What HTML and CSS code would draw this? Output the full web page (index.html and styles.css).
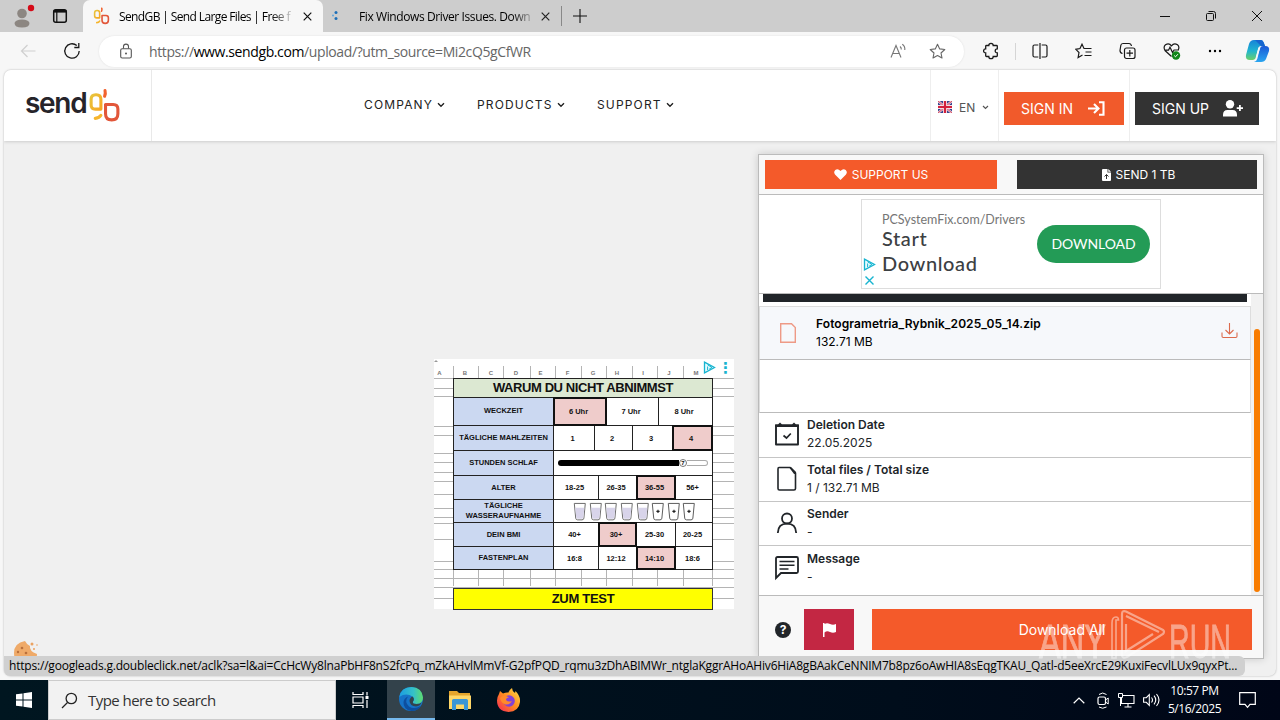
FILE: index.html
```html
<!DOCTYPE html>
<html lang="en">
<head>
    <meta charset="UTF-8">
    <meta name="viewport" content="width=device-width, initial-scale=1.0">
    <title>SendGB | Send Large Files</title>
    <link rel="stylesheet" href="styles.css">
</head>
<body>
    <svg width="0" height="0" class="defs" aria-hidden="true">
        <defs>
            <linearGradient id="yellow" x1="0" y1="0" x2="1" y2="1"><stop offset="0" stop-color="#e8c53c"/><stop offset="1" stop-color="#f6a623"/></linearGradient>
            <linearGradient id="edgeA" x1="0" y1="0" x2="1" y2="0"><stop offset="0" stop-color="#1b9de2"/><stop offset=".6" stop-color="#35c1c8"/><stop offset="1" stop-color="#5fdc6c"/></linearGradient>
            <linearGradient id="copA" x1="0" y1="0" x2="0" y2="1"><stop offset="0" stop-color="#1683d8"/><stop offset=".55" stop-color="#20b5d0"/><stop offset="1" stop-color="#6bd06a"/></linearGradient>
            <linearGradient id="copB" x1="0" y1="0" x2="0" y2="1"><stop offset="0" stop-color="#1a59d6"/><stop offset="1" stop-color="#2aa6f0"/></linearGradient>
            <linearGradient id="fox" x1="1" y1="0" x2="0" y2="1"><stop offset="0" stop-color="#ffe24a"/><stop offset=".5" stop-color="#ff8a1f"/><stop offset="1" stop-color="#f5205c"/></linearGradient>
            <symbol id="gb" viewBox="0 0 32 34">
                <g fill="none" stroke-width="3" stroke-linecap="round" stroke-linejoin="round">
                    <path d="M12.500 20.500H7q-4 0-4-4V11q0-4.500 4.500-4.500H8q4.500 0 4.500 4.500v9.500" stroke="url(#yellow)"/>
                    <path d="M7 29.500q4-.3 5.500-3" stroke="#f6b52c"/>
                    <path d="M16.500 2.500q.8 3-.4 5.500" stroke="#f2622f"/>
                    <path d="M17 16h7.500q4.500 0 4.500 4.500V25q0 6-6 6t-6-6z" stroke="#e2573a"/>
                </g>
            </symbol>
            <symbol id="caret" viewBox="0 0 8 6"><path d="M1 1.200l3 3 3-3" fill="none" stroke="currentColor" stroke-width="1.400"/></symbol>
            <symbol id="adplay" viewBox="0 0 13 13"><path d="M1.500 1.200v10.600l10-5.300z" fill="#e4fbff" stroke="#17b4d0" stroke-width="1.300"/><path d="M4.600 5.500v3.500M4.600 3.800l4.400 2.700-2.800 1.600" fill="none" stroke="#17b4d0"/></symbol>
            <symbol id="glass" viewBox="0 0 14 20"><path d="M1.200 1.500h11.600L11.300 17q-.2 1.800-2 1.800H4.700q-1.800 0-2-1.800z" fill="#fff" stroke="#666"/><path d="M2.200 6h9.600l-1.100 10.500q-.2 1.200-1.500 1.200H4.800q-1.300 0-1.500-1.200z" fill="#d8d4ea"/></symbol>
            <symbol id="glass-empty" viewBox="0 0 14 20"><path d="M1.200 1.500h11.600L11.300 17q-.2 1.800-2 1.800H4.700q-1.800 0-2-1.800z" fill="#fff" stroke="#555"/><path d="M5.500 9.800h3.400M7.200 8.100v3.400" stroke="#222" stroke-width="1.200"/></symbol>
        </defs>
    </svg>

    <!-- browser tabs -->
    <div class="tabstrip">
        <svg class="profile" width="22" height="24" viewBox="0 0 22 24"><circle cx="8" cy="9.500" r="4.800" fill="#8c8681"/><path d="M.5 19q1-3.600 7.500-3.600t7.500 3.600q0 4.500-7.500 4.500T.5 19z" fill="#8c8681"/><circle cx="17" cy="4" r="3.200" fill="#d50b18"/></svg>
        <svg class="workspaces" width="16" height="16" viewBox="0 0 16 16"><rect x="1.700" y="1.700" width="12.600" height="12.600" rx="2" fill="none" stroke="#111" stroke-width="1.500"/><path d="M1.700 3.300h12.600" stroke="#111" stroke-width="2.600"/><path d="M4.800 4v10" stroke="#111" stroke-width="1.200"/></svg>
        <div class="tab active">
            <svg width="17" height="18"><use href="#gb"/></svg>
            <span class="tab-title t1">SendGB | Send Large Files | Free f</span>
            <svg class="tab-x" width="9" height="9" viewBox="0 0 9 9"><path d="M.7.7l7.600 7.600M8.300.7L.7 8.300" stroke="#111" stroke-width="1.200"/></svg>
        </div>
        <div class="tab second">
            <svg width="8" height="12" viewBox="0 0 8 12"><circle cx="5" cy="2.500" r="1.500" fill="#1d6fb8"/><circle cx="5" cy="8.500" r="1.500" fill="#1d6fb8"/><circle cx="2" cy="5.500" r="1" fill="#5fa4db"/></svg>
            <span class="tab-title t2">Fix Windows Driver Issues. Down</span>
            <svg class="tab-x" width="9" height="9" viewBox="0 0 9 9"><path d="M.7.7l7.600 7.600M8.300.7L.7 8.300" stroke="#222" stroke-width="1.200"/></svg>
        </div>
        <span class="tab-sep"></span>
        <svg class="newtab" width="14" height="14" viewBox="0 0 14 14"><path d="M7 0v14M0 7h14" stroke="#111" stroke-width="1.100"/></svg>
        <div class="winbtns">
            <svg width="10" height="10" viewBox="0 0 10 10"><path d="M0 5.500h10" stroke="#111"/></svg>
            <svg width="10" height="10" viewBox="0 0 10 10"><rect x=".5" y="2.500" width="7" height="7" rx="1" fill="none" stroke="#111"/><path d="M2.500.5h5q2 0 2 2v5" fill="none" stroke="#111"/></svg>
            <svg width="10" height="10" viewBox="0 0 10 10"><path d="M0 0l10 10M10 0L0 10" stroke="#111"/></svg>
        </div>
    </div>

    <!-- address bar -->
    <div class="toolbar">
        <svg class="back" width="16" height="14" viewBox="0 0 16 14"><path d="M15.500 7H1.500M7.500 1l-6 6 6 6" fill="none" stroke="#cfcfcf" stroke-width="1.200"/></svg>
        <svg class="reload" width="18" height="18" viewBox="0 0 18 18"><path d="M16.200 9a7.200 7.200 0 1 1-2.400-5.400" fill="none" stroke="#1a1a1a" stroke-width="1.300"/><path d="M15.800 1v4.500h-4.500" fill="none" stroke="#1a1a1a" stroke-width="1.300"/></svg>
        <div class="address">
            <svg width="12" height="16" viewBox="0 0 12 16"><rect x=".7" y="5.700" width="10.600" height="9.300" rx="1.500" fill="none" stroke="#555" stroke-width="1.100"/><path d="M3.500 5.500V3.600a2.500 2.500 0 0 1 5 0v1.900" fill="none" stroke="#555" stroke-width="1.100"/><circle cx="6" cy="10.400" r="1" fill="#555"/></svg>
            <span class="url">https://<b>www.sendgb.com</b>/upload/?utm_source=Mi2cQ5gCfWR</span>
            <svg class="aloud" width="17" height="16" viewBox="0 0 17 16"><path d="M1 14.500L6 2.500l5 12M2.800 10.500h6.500M10 3.500q1.500 1.200 1.300 3M12.300 1.300q3 2.200 2.500 5.700" fill="none" stroke="#777" stroke-width="1.100"/></svg>
            <svg width="17" height="16" viewBox="0 0 17 16"><path d="M8.500 1.200l2.200 4.700 5.100.6-3.800 3.500 1 5-4.500-2.500L4 15l1-5-3.800-3.500 5.100-.6z" fill="none" stroke="#666" stroke-width="1.100" stroke-linejoin="round"/></svg>
        </div>
        <div class="tools">
            <svg width="16" height="18" viewBox="0 0 16 18"><path d="M3.500 3.500h2.300a2.200 2.200 0 0 1 4.400 0h3.300q.8 0 .8.800v2.500a2.100 2.100 0 0 0 0 4.200v2.700q0 .8-.8.800h-3.300a2.200 2.200 0 0 1-4.400 0H3.500q-.8 0-.8-.8V11a2 2 0 0 1 0-4.200V4.300q0-.8.8-.8z" fill="none" stroke="#1a1a1a" stroke-width="1.300"/></svg>
            <i class="tool-sep"></i>
            <svg width="16" height="16" viewBox="0 0 16 16"><path d="M6.300 2H2.500Q1 2 1 3.500v9Q1 14 2.500 14h3.800M9.700 2h3.800Q15 2 15 3.500v9q0 1.500-1.500 1.500H9.700M8 0v16" fill="none" stroke="#1a1a1a" stroke-width="1.200"/></svg>
            <svg width="17" height="16" viewBox="0 0 17 16"><path d="M9.500 5.500H9L7 1.200 5 5.500.8 6.300 4 9.500l-.9 5L7.500 12M9.500 5.500h7M10.500 9h6M9.500 12.500h7" fill="none" stroke="#1a1a1a" stroke-width="1.200"/></svg>
            <svg width="17" height="18" viewBox="0 0 17 18"><rect x="5.500" y="6" width="10.500" height="10.500" rx="2" fill="none" stroke="#1a1a1a" stroke-width="1.200"/><path d="M10.800 8v6.500M7.500 11.200H14M3.500 11.500Q1 11 1 8.500L1.800 3.500Q2 1.500 4 1.500h6q2 0 2.500 2.500" fill="none" stroke="#1a1a1a" stroke-width="1.200"/></svg>
            <svg width="18" height="18" viewBox="0 0 18 18"><path d="M8.500 14.500L2 8.500Q0 5 2.500 2.800 6 .5 8.500 3.800 11 .5 14.500 2.800 17 5 15 8.300M1.500 8.200h4l1.500-3 2.500 5.300 1.500-2.500h5" fill="none" stroke="#1a1a1a" stroke-width="1.200"/><circle cx="13" cy="13.500" r="4.200" fill="#11861a"/><path d="M11.200 13.500l1.300 1.300 2.400-2.600" fill="none" stroke="#fff"/></svg>
            <svg width="14" height="4" viewBox="0 0 14 4"><circle cx="2" cy="2" r="1.200"/><circle cx="7" cy="2" r="1.200"/><circle cx="12" cy="2" r="1.200"/></svg>
            <svg class="copilot" width="25" height="24" viewBox="0 0 25 24"><path d="M9 1h7q2 0 2.700 2.500L20 7h-4q-2 0-2.600 2L11 18q-.8 3-3.500 3H5q-5 0-4-5L4 5q1.300-4 5-4z" fill="url(#copA)"/><path d="M16 23H9q2.500-.3 3.400-3.500L15 9q.6-2 3-2h2q5 0 4 5l-3 8q-1.300 3-5 3z" fill="url(#copB)"/><path d="M10 1h6q2 0 2.700 2.500L20 7h-4l-2-2z" fill="#1665cf"/><path d="M13.400 8.500h2L12 18l-1.300.5z" fill="#f4f8fb"/></svg>
        </div>
    </div>

    <div class="viewport">
        <header class="site-header">
            <a class="logo"><span>send</span><svg width="33" height="35"><use href="#gb"/></svg></a>
            <nav class="menu">
                <a class="m1">COMPANY <svg width="8" height="6"><use href="#caret"/></svg></a>
                <a class="m2">PRODUCTS <svg width="8" height="6"><use href="#caret"/></svg></a>
                <a class="m3">SUPPORT <svg width="8" height="6"><use href="#caret"/></svg></a>
            </nav>
            <div class="lang">
                <svg width="14" height="12" viewBox="0 0 14 12"><path d="M0 0h14v12H0z" fill="#34458f"/><path d="M0 0l14 12M14 0L0 12" stroke="#e9c9d6" stroke-width="2.400"/><path d="M0 0l14 12M14 0L0 12" stroke="#d32f45" stroke-width=".8"/><path d="M7 0v12M0 6h14" stroke="#f6dfe5" stroke-width="4"/><path d="M7 0v12M0 6h14" stroke="#d3203c" stroke-width="2.200"/></svg>
                <span>EN</span>
                <svg width="7" height="5"><use href="#caret"/></svg>
            </div>
            <div class="signin-wrap"><a class="btn signin"><span>SIGN IN</span><svg width="17" height="15" viewBox="0 0 17 15"><path d="M0 7.500h9.500M6 3l4.500 4.500L6 12M11 1.200h4.500v12.600H11" fill="none" stroke="#fff" stroke-width="2.100"/></svg></a></div>
            <div class="signup-wrap"><a class="btn signup"><span>SIGN UP</span><svg width="20" height="17" viewBox="0 0 20 17"><circle cx="7" cy="4.300" r="4.200" fill="#fff"/><path d="M0 16.500v-1.800Q0 10 4.500 10h5q4.500 0 4.500 4.700v1.800zM16 5v6h1.800V5zM13.700 7.200v1.700H20V7.200z" fill="#fff"/></svg></a></div>
        </header>

        <main class="stage">
            <!-- left banner -->
            <div class="banner">
                <svg class="sheet" width="300" height="250" viewBox="0 0 300 250">
                    <path transform="translate(0 .5)" d="M0 19h300M0 29h300M0 37h300M0 67h300M0 76h300M0 94h300M0 103h300M0 113h300M0 122h300M0 135h300M0 149h300M0 158h300M0 164h300M0 180h300M0 202h300M0 210h300M0 219h300M0 228h300M0 239h300" stroke="#b4b4b4"/>
                    <path d="M19.500 7v220M44.500 7v220M69.500 7v220M96.500 7v220M121.500 7v220M147.500 7v220M172.500 7v220M198.500 7v220M223.500 7v220M249.500 7v220M278.500 19v208" stroke="#b4b4b4"/>
                    <path d="M0 0h300v7H0z" fill="#fff"/>
                    <path d="M0 3l2-2 2 2z" fill="#999"/>
                    <g class="cols"><text x="5.500" y="16">A</text><text x="31" y="16">B</text><text x="57" y="16">C</text><text x="82" y="16">D</text><text x="106.500" y="16">E</text><text x="133.500" y="16">F</text><text x="159" y="16">G</text><text x="183" y="16">H</text><text x="209" y="16">I</text><text x="235" y="16">J</text><text x="262" y="16">M</text></g>
                </svg>
                <div class="adchoices"><svg width="13" height="13"><use href="#adplay"/></svg><i>⋮</i></div>
                <div class="quiz">
                    <div class="q-title">WARUM DU NICHT ABNIMMST</div>
                    <div class="q-row r1"><b>WECKZEIT</b><span class="on">6 Uhr</span><span>7 Uhr</span><span>8 Uhr</span></div>
                    <div class="q-row r2"><b>TÄGLICHE MAHLZEITEN</b><span>1</span><span>2</span><span>3</span><span class="on">4</span></div>
                    <div class="q-row r3"><b>STUNDEN SCHLAF</b><div class="slider"><div class="slider-fill"></div><em>7</em><div class="slider-rest"></div></div></div>
                    <div class="q-row r4"><b>ALTER</b><span>18-25</span><span>26-35</span><span class="on">36-55</span><span>56+</span></div>
                    <div class="q-row r5"><b>TÄGLICHE<br>WASSERAUFNAHME</b>
                        <div class="glasses">
                            <svg><use href="#glass"/></svg><svg><use href="#glass"/></svg><svg><use href="#glass"/></svg><svg><use href="#glass"/></svg><svg><use href="#glass"/></svg><svg><use href="#glass-empty"/></svg><svg><use href="#glass-empty"/></svg><svg><use href="#glass-empty"/></svg>
                        </div>
                    </div>
                    <div class="q-row r6"><b>DEIN BMI</b><span>40+</span><span class="on">30+</span><span>25-30</span><span>20-25</span></div>
                    <div class="q-row r7"><b>FASTENPLAN</b><span>16:8</span><span>12:12</span><span class="on">14:10</span><span>18:6</span></div>
                </div>
                <div class="q-cta">ZUM TEST</div>
            </div>

            <!-- transfer card -->
            <section class="card">
                <div class="card-top">
                    <a class="support"><svg width="13" height="11" viewBox="0 0 13 11"><path d="M6.500 11L1 5.600Q-.8 3 1.300.9 4-.9 6.500 2 9-.9 11.700.9 13.800 3 12 5.600z" fill="#fff"/></svg><span>SUPPORT US</span></a>
                    <a class="send"><svg width="9" height="12" viewBox="0 0 9 12"><path d="M0 1q0-1 1-1h4.500v3.500H9V11q0 1-1 1H1q-1 0-1-1zM6.300 0L9 2.700H6.300z" fill="#fff"/><path d="M4.500 10V5.500M2.500 7.500l2-2 2 2" fill="none" stroke="#333"/></svg><span>SEND 1 TB</span></a>
                </div>
                <div class="card-ad">
                    <div class="ad-box">
                        <div class="ad-side"><svg width="13" height="13"><use href="#adplay"/></svg><svg width="11" height="11" viewBox="0 0 11 11"><path d="M1.500 1.500l8 8M9.500 1.500l-8 8" stroke="#17b4d0" stroke-width="1.400"/></svg></div>
                        <div class="ad-copy"><small>PCSystemFix.com/Drivers</small><strong class="s1">Start</strong><strong class="s2">Download</strong></div>
                        <a class="ad-btn">DOWNLOAD</a>
                    </div>
                </div>
                <div class="card-body">
                    <div class="scroll">
                        <div class="bar"></div>
                        <div class="file">
                            <svg width="16" height="20" viewBox="0 0 16 20"><path d="M.7.7h10.800l3.800 3.800v14.800H.7z" fill="none" stroke="#ee9a86" stroke-width="1.400"/></svg>
                            <div class="pair"><b class="fname">Fotogrametria_Rybnik_2025_05_14.zip</b><span class="s-size">132.71 MB</span></div>
                            <svg class="dl-icon" width="17" height="16" viewBox="0 0 17 16"><path d="M8.500 0v11M4.500 7l4 4 4-4M1 9.500v3.800q0 1.200 1.200 1.200h12.600q1.200 0 1.200-1.200V9.500" fill="none" stroke="#dc6b4d" stroke-width="1.100"/></svg>
                        </div>
                        <div class="blank"></div>
                        <div class="info i1"><svg width="26" height="26" viewBox="0 0 26 26"><path d="M2 4.500h22v19H2z" fill="none" stroke="#212529" stroke-width="1.900" stroke-linejoin="round"/><path d="M1 3.500h3l2-2 2 2h10l2-2 2 2h3V6H1z" fill="#212529"/><path d="M9.500 14.500l3 2.500 4.300-4.500" fill="none" stroke="#212529" stroke-width="1.700"/></svg><div class="pair"><b>Deletion Date</b><span>22.05.2025</span></div></div>
                        <div class="info i2"><svg width="26" height="26" viewBox="0 0 26 26"><path d="M5 1.500h11l5.500 5.500v15.500q0 1.500-1.500 1.500H5.500Q4 24 4 22.500V3q0-1.500 1-1.500z" fill="none" stroke="#212529" stroke-width="1.600"/><path d="M15 1h2l5 5v2h-2z" fill="#212529"/></svg><div class="pair"><b>Total files / Total size</b><span>1 / 132.71 MB</span></div></div>
                        <div class="info i3"><svg width="26" height="26" viewBox="0 0 26 26"><circle cx="13" cy="8.500" r="5" fill="none" stroke="#212529" stroke-width="1.800"/><path d="M3.800 23q.3-9.300 9.200-9.300t9.200 9.300" fill="none" stroke="#212529" stroke-width="1.800"/></svg><div class="pair"><b>Sender</b><span>-</span></div></div>
                        <div class="info i4"><svg width="26" height="26" viewBox="0 0 26 26"><path d="M2 23V3.500Q2 2 3.500 2h19Q24 2 24 3.500v13q0 1.500-1.500 1.500H7z" fill="none" stroke="#212529" stroke-width="1.800"/><path d="M5.500 6.500h15M5.500 10.300h15M5.500 14h9" stroke="#212529" stroke-width="1.600"/></svg><div class="pair"><b>Message</b><span>-</span></div></div>
                    </div>
                    <div class="track"><div class="thumb"></div></div>
                </div>
                <div class="card-foot">
                    <span class="help">?</span>
                    <a class="flag"><svg width="13" height="14" viewBox="0 0 13 14"><path d="M0 0h1.500v1Q4-.5 7 1t6 0v8q-3 1.500-6 0t-5.500.5V14H0z" fill="#fff"/></svg></a>
                    <a class="dl-all">Download All</a>
                </div>
            </section>
        </main>
        <svg class="cookie" width="26" height="26" viewBox="0 0 26 26"><path d="M12 1Q14 5 17 6q-1 5 7 8 0 11-11 11.500Q1 25 1 13 1 3 12 1z" fill="#efaa69"/><g fill="#b9703c"><circle cx="9" cy="8" r="1.300"/><circle cx="5" cy="12" r="1.200"/><circle cx="13" cy="13" r="1.300"/></g><g fill="#eba261"><circle cx="19" cy="4" r="1.500"/><circle cx="24" cy="5" r=".8"/><circle cx="21" cy="9" r="1"/></g></svg>
    </div>

    <div class="status"><span>https://googleads.g.doubleclick.net/aclk?sa=l&amp;ai=CcHcWy8lnaPbHF8nS2fcPq_mZkAHvlMmVf-G2pfPQD_rqmu3zDhABIMWr_ntglaKggrAHoAHiv6HiA8gBAakCeNNIM7b8pz6oAwHIA8sEqgTKAU_Qatl-d5eeXrcE29KuxiFecvlLUx9qyxPt...</span></div>

    <svg class="watermark" width="206" height="64" viewBox="0 0 206 64">
        <g class="wm-text"><text x="3" y="50" textLength="67" lengthAdjust="spacingAndGlyphs">ANY</text><text x="133" y="50" textLength="62" lengthAdjust="spacingAndGlyphs">RUN</text></g>
        <path d="M76 50V15q0-6 4-6 2.500 0 2.500 3h-2.500v38z" fill="none" stroke="#fff" stroke-width="1.600"/>
        <path d="M86 48V6q0-4 4-2.500L127 22q2 1.500 0 4L91 49q-5 2-5-2M90 8l33 16M90 16v27l27-17" fill="none" stroke="#fff" stroke-width="2.200"/>
    </svg>

    <!-- windows taskbar -->
    <footer class="taskbar">
        <div class="start"><svg width="16" height="16" viewBox="0 0 16 16"><path d="M0 2.300L6.500 1.400v6.100H0zM7.500 1.200L16 0v7.500H7.500zM0 8.500h6.500v6.100L0 13.700zM7.500 8.500H16V16l-8.500-1.200z" fill="#fff"/></svg></div>
        <div class="search"><svg width="17" height="17" viewBox="0 0 17 17"><circle cx="10.300" cy="6.500" r="5.200" fill="none" stroke="#222" stroke-width="1.300"/><path d="M6.500 10.500L1 16" stroke="#222" stroke-width="1.300"/></svg><span>Type here to search</span></div>
        <div class="apps">
            <div><svg width="17" height="16" viewBox="0 0 17 16"><path d="M1 0v2.500h10V0M1 5h10v6H1zM1 16v-2.500h10V16M15 0v3.500M15 8v8" fill="none" stroke="#fff" stroke-width="1.200"/><path d="M13.500 4h3v3h-3z" fill="#fff"/></svg></div>
            <div class="running"><svg width="24" height="24" viewBox="0 0 24 24"><circle cx="12" cy="12" r="12" fill="#1673c8"/><path d="M.3 10Q2 0 12.500 0 23 .5 24 10.500q0 6-6.500 6.500-4.500 0-3.500-2.500 2-2.500-.5-5Q7 5.500.3 10z" fill="url(#edgeA)"/><path d="M9 9.500q-4 5 1 10 5 3.500 12-.8-3 5.300-9.500 5.300Q4 22.500 4.500 15 5 11 9 9.500z" fill="#0d4f9f"/><path d="M13.500 9.500q2.500 2.500.5 5-1 2.500 3.500 2.500 3.500 0 5-1.500-1 3.500-5.500 4-6-.5-6.500-5.500 0-3 3-4.500z" fill="#33434c"/></svg></div>
            <div><svg width="22" height="19" viewBox="0 0 22 19"><path d="M0 0h8l2 2h11v4H0z" fill="#e5a52c"/><path d="M0 4.500h22V18H0z" fill="#ffd768"/><path d="M3 9.500q0-1.500 1.500-1.500h13Q19 8 19 9.500V19h-4v-5.500H7V19H3z" fill="#3b96d6"/></svg></div>
            <div><svg width="23" height="24" viewBox="0 0 23 24"><path d="M2 6l1-3 3 2.500Q9 4 11.500 4.500 12 2 15 0q0 3 3 5l.5-2q5 5 4.500 11-1 9.500-11.500 10Q0 23 0 12.500 0 9 2 6z" fill="url(#fox)"/><circle cx="12" cy="13" r="5.800" fill="#8342d6"/><path d="M3 10q4-4 9-.5-3 0-3 2.500 2 2.500 6 1-2 4-6.500 3.500Q4 15 3 10z" fill="#ff8a2a"/></svg></div>
        </div>
        <div class="tray">
            <svg width="12" height="7" viewBox="0 0 12 7"><path d="M.7 6.200L6 1l5.300 5.200" fill="none" stroke="#fff" stroke-width="1.200"/></svg>
            <svg width="13" height="17" viewBox="0 0 13 17"><rect x="1" y="5" width="7.500" height="7.500" rx="1.500" fill="none" stroke="#fff" stroke-width="1.200"/><path d="M8.500 8l2.700-2v6l-2.700-2M2 2.500Q5.500-.5 9.500 2.500M2 15q3.500 2.500 7.500 0" fill="none" stroke="#fff"/></svg>
            <svg width="17" height="15" viewBox="0 0 17 15"><path d="M5 2.500h11v8H3.500V5M10 10.500V14M6.500 14h7" fill="none" stroke="#fff" stroke-width="1.100"/><path d="M.5.500h4v4h-4zM2.500 4.500V13" fill="none" stroke="#fff"/></svg>
            <svg width="17" height="14" viewBox="0 0 17 14"><path d="M.6 4.700h2.700l3-3v10.600l-3-3H.6zM8.500 4.500q2 2.500 0 5M11 2.700q3.500 4.300 0 8.600M13.500 1q5 6 0 12" fill="none" stroke="#fff" stroke-width="1.100"/></svg>
            <div class="clock"><span class="c1">10:57 PM</span><span class="c2">5/16/2025</span></div>
            <svg width="17" height="17" viewBox="0 0 17 17"><path d="M.7.700h15.600v11.600H11l-2.500 3-2.500-3H.7z" fill="none" stroke="#fff" stroke-width="1.200"/></svg>
        </div>
    </footer>
</body>
</html>
```
FILE: styles.css
```css
* {
    box-sizing: border-box;
}

body {
    margin: 0;
    width: 1280px;
    height: 720px;
    overflow: hidden;
    position: relative;
    display: flex;
    flex-direction: column;
    background: #f7f7f7;
    font-family: "Inter", "Liberation Sans", sans-serif;
    color: #212529;
}

svg {
    display: block;
    flex: none;
}

span, b, strong, small, a {
    white-space: nowrap;
}

.defs {
    position: absolute;
}

/* browser chrome */
.tabstrip {
    height: 32px;
    flex: none;
    display: flex;
    align-items: center;
    background: #cdcdcd;
    font-family: "Open Sans", "Noto Sans", sans-serif;
}

.profile {
    margin: 0 0 0 14px;
}

.workspaces {
    margin: 0 15px 0 16px;
}

.tab {
    height: 32px;
    width: 240px;
    display: flex;
    align-items: center;
    padding: 0 11px 0 10px;
    color: #111;
}

.tab.active {
    background: #f7f7f7;
    border-radius: 7px 7px 0 0;
}

.tab.second {
    padding: 0 13px 0 8px;
}

.tab-title {
    flex: 1;
    overflow: hidden;
    font-size: 12px;
    color: #000;
    -webkit-mask-image: linear-gradient(to right, #000 88%, rgba(0, 0, 0, 0.15) 100%);
    mask-image: linear-gradient(to right, #000 88%, rgba(0, 0, 0, 0.15) 100%);
}

.t1 {
    margin: 0 11px 0 9px;
    letter-spacing: -0.62px;
}

.t2 {
    margin: 0 8px 0 20px;
    letter-spacing: -0.4px;
}

.tab-sep {
    width: 1px;
    height: 20px;
    margin-left: -2px;
    background: #888;
}

.newtab {
    margin-left: 11px;
}

.winbtns {
    display: flex;
    gap: 36px;
    margin-left: auto;
    padding-right: 18px;
}

.toolbar {
    height: 38px;
    flex: none;
    display: flex;
    align-items: center;
    background: #f7f7f7;
}

.back {
    margin-left: 20px;
}

.reload {
    margin: 0 18px 0 27px;
}

.address {
    width: 865px;
    height: 31px;
    display: flex;
    align-items: center;
    padding: 0 18px 0 21px;
    background: #fff;
    border-radius: 16px;
    box-shadow: 0 0 2px #ddd;
}

.url {
    flex: 1;
    margin-left: 17px;
    font: 14px "Open Sans", "Noto Sans", sans-serif;
    letter-spacing: -0.39px;
    color: #666;
}

.url b {
    font-weight: 400;
    color: #000;
}

.aloud {
    margin-right: 22px;
}

.tools {
    flex: 1;
    display: flex;
    align-items: center;
    gap: 27px;
    padding-left: 19px;
}

.tool-sep {
    width: 1px;
    height: 17px;
    margin: 0 -11px;
    background: #d5d5d5;
}

.copilot {
    margin-left: -4px;
}

.viewport {
    position: relative;
    height: 606px;
    flex: none;
    margin: 0 4px;
    overflow: hidden;
    border-radius: 7px;
    background: #f0f0f0;
    box-shadow: 0 0 2px #aaa;
}

/* site header */
.site-header {
    height: 71px;
    display: flex;
    background: #fff;
    box-shadow: 0 1px 3px #ccc;
}

.logo {
    width: 148px;
    display: flex;
    padding: 18px 0 0 21px;
    border-right: 1px solid #e9e9e9;
}

.logo span {
    width: 63px;
    font: 600 28px/30px "Inter", sans-serif;
    letter-spacing: -1.3px;
    color: #26242a;
}

.menu {
    flex: 1;
    display: flex;
    align-items: flex-start;
    padding: 27px 0 0 212px;
    font-size: 12px;
    line-height: 16px;
    color: #222;
}

.menu a {
    display: flex;
    align-items: center;
    gap: 4px;
    letter-spacing: 1.15px;
}

.m1 {
    width: 113px;
}

.m2 {
    width: 120px;
}

.lang {
    width: 69px;
    display: flex;
    align-items: center;
    gap: 7px;
    padding: 3px 0 0 7px;
    border-left: 1px solid #eee;
    border-right: 1px solid #eee;
    font-size: 12px;
    color: #555;
}

.signin-wrap {
    width: 131px;
    padding: 22px 0 0 5px;
    border-right: 1px solid #eee;
}

.signup-wrap {
    width: 146px;
    padding: 22px 17px 0 5px;
}

.btn {
    height: 33px;
    display: flex;
    align-items: center;
    justify-content: space-between;
    padding: 0 17px;
    font-size: 14px;
    color: #fff;
}

.signin {
    width: 120px;
    padding-right: 19px;
    background: #f15a2b;
}

.signup {
    padding: 0 16px 0 17px;
    background: #333;
}

.stage {
    height: 535px;
    display: flex;
}

/* spreadsheet banner */
.banner {
    position: relative;
    width: 300px;
    height: 250px;
    margin: 218px 24px 0 430px;
    padding: 19px 21px 0 19px;
    background: #fff;
    font-family: "Liberation Sans", Arial, sans-serif;
    color: #111;
}

.sheet {
    position: absolute;
    left: 0;
    top: 0;
}

.cols text {
    font: bold 6px "Liberation Sans", sans-serif;
    fill: #777;
    text-anchor: middle;
}

.adchoices {
    position: absolute;
    top: 0;
    right: 0;
    width: 33px;
    height: 17px;
    display: flex;
    align-items: center;
    gap: 2px;
    padding-left: 2px;
    background: #fff;
    color: #17b4d0;
}

.adchoices i {
    font: bold 15px/16px "DejaVu Sans", sans-serif;
}

.quiz {
    position: relative;
    background: #fff;
    border: 1px solid #222;
}

.q-title {
    height: 18px;
    background: #dce8d2;
    text-align: center;
    font: bold 13px/18px "Liberation Sans", sans-serif;
    letter-spacing: -0.4px;
}

.q-row {
    display: grid;
    border-top: 1px solid #222;
    font-size: 7.5px;
    font-weight: bold;
}

.q-row > * {
    display: flex;
    align-items: center;
    justify-content: center;
    border-left: 1px solid #222;
}

.q-row > span {
    padding-right: 3px;
}

.q-row > b {
    border-left: 0;
    background: #cbd8f1;
    text-align: center;
    line-height: 9.5px;
}

.q-row .on {
    border: 2px solid #111;
    margin: -1px -1px -1px 0;
    background: #efcccb;
    position: relative;
}

.r1 {
    height: 28px;
    grid-template-columns: 99px 53px 52px 1fr;
}

.r2 {
    height: 25px;
    grid-template-columns: 99px 41px 38px 40px 1fr;
}

.r3 {
    height: 25px;
    grid-template-columns: 99px 1fr;
}

.r4, .r6, .r7 {
    height: 24px;
    grid-template-columns: 99px 45px 38px 39px 1fr;
}

.r5 {
    height: 23px;
    grid-template-columns: 99px 1fr;
}

.r7 {
    height: 23px;
}

.r1 > b, .r5 > b {
    padding-bottom: 1px;
}

.slider {
    padding: 0 4px;
}

.slider-fill {
    width: 121px;
    height: 6px;
    background: #000;
    border-radius: 3px 0 0 3px;
}

.slider em {
    width: 8px;
    height: 8px;
    border: 1px solid #777;
    border-radius: 50%;
    background: #fff;
    text-align: center;
    font: bold 6px/6px "Liberation Sans", sans-serif;
}

.slider-rest {
    flex: 1;
    height: 6px;
    border: 1px solid #aaa;
    border-left: 0;
    border-radius: 0 3px 3px 0;
}

.glasses {
    gap: 2px;
    padding-left: 3px;
}

.glasses svg {
    width: 13.6px;
    height: 19px;
}

.q-cta {
    position: relative;
    height: 22px;
    margin-top: 18px;
    border: 1px solid #333;
    background: #ff0;
    text-align: center;
    font: bold 13px/20px "Liberation Sans", sans-serif;
    letter-spacing: -0.3px;
}

/* transfer card */
.card {
    width: 506px;
    height: 505px;
    margin-top: 13px;
    display: flex;
    flex-direction: column;
    border: 1px solid #bbb;
    background: #fff;
    box-shadow: 0 0 8px rgba(0, 0, 0, 0.16);
}

.card-top {
    height: 40px;
    flex: none;
    display: flex;
    gap: 20px;
    padding: 5px 6px;
    background: #f8f8f8;
    border-bottom: 1px solid #bbb;
    font-size: 12px;
    color: #fff;
}

.card-top a {
    height: 29px;
    display: flex;
    align-items: center;
    justify-content: center;
    gap: 5px;
}

.support {
    width: 232px;
    background: #f45a2a;
}

.send {
    width: 240px;
    padding-left: 3px;
    background: #333;
}

.card-ad {
    height: 99px;
    flex: none;
    padding: 4px 0 0 102px;
    border-bottom: 1px solid #bbb;
}

.ad-box {
    width: 300px;
    height: 90px;
    display: flex;
    border: 1px solid #ddd;
    font-family: "Lato", "Open Sans", sans-serif;
}

.ad-side {
    width: 20px;
    padding: 58px 0 0 1px;
}

.ad-side svg + svg {
    margin: 4px 0 0 1px;
}

.ad-copy {
    width: 155px;
    display: flex;
    flex-direction: column;
    padding-top: 12px;
    color: #3c4043;
}

.ad-copy small {
    font-size: 12.5px;
    line-height: 16px;
    color: #757575;
}

.ad-copy strong {
    position: relative;
    top: -2px;
    font-size: 20px;
    font-weight: 500;
    line-height: 25px;
    letter-spacing: 0.6px;
}

.ad-btn {
    width: 113px;
    height: 38px;
    margin-top: 25px;
    border-radius: 19px;
    background: #239b56;
    color: #fff;
    font-size: 14px;
    line-height: 38px;
    text-align: center;
    letter-spacing: -0.1px;
}

.card-body {
    height: 302px;
    flex: none;
    display: flex;
    border-bottom: 1px solid #bbb;
}

.scroll {
    width: 492px;
}

.bar {
    height: 8px;
    margin: 0 4px;
    background: #212529;
}

.file {
    height: 54px;
    margin-top: 4px;
    display: flex;
    align-items: center;
    padding: 0 12px 0 20px;
    background: #f6f8fb;
    border: 1px solid #ddd;
    border-bottom-color: #bbb;
}

.file .pair {
    flex: 1;
    margin-left: 20px;
    color: #000;
}

.fname {
    letter-spacing: 0.08px;
}

.dl-icon {
    margin-bottom: 4px;
}

.pair {
    display: flex;
    flex-direction: column;
    font-size: 12px;
    line-height: 18px;
}

.pair b {
    font-weight: 600;
}

.blank {
    height: 53px;
    border: 1px solid #ddd;
    border-top: 0;
    border-bottom-color: #bbb;
}

.info {
    height: 44px;
    display: flex;
    gap: 7px;
    padding: 3px 0 0 15px;
    border-bottom: 1px solid #c5c5c5;
}

.info svg {
    margin-top: 5px;
}

.i4 {
    height: 49px;
    padding-top: 4px;
    border-bottom: 0;
}

.i1 {
    height: 45px;
}

.track {
    width: 12px;
    padding: 35px 3px 3px;
    background: #f1f1f1;
}

.thumb {
    height: 263px;
    border-radius: 3px;
    background: #f87c00;
}

.card-foot {
    flex: 1;
    display: flex;
    padding: 13px 11px 0 17px;
    background: #f8f8f8;
}

.help {
    width: 16px;
    height: 16px;
    margin: 13px 13px 0 -1px;
    border-radius: 50%;
    background: #212529;
    color: #fff;
    font-weight: 700;
    font-size: 12px;
    line-height: 16px;
    text-align: center;
}

.flag {
    width: 50px;
    height: 41px;
    display: flex;
    align-items: center;
    justify-content: center;
    background: #c32743;
}

.dl-all {
    width: 380px;
    height: 41px;
    margin-left: 18px;
    background: #f45a2a;
    color: #fff;
    font-size: 14px;
    line-height: 42px;
    text-align: center;
}

.cookie {
    position: absolute;
    left: 9px;
    top: 570px;
}

/* link preview over the page */
.status {
    position: absolute;
    left: 4px;
    top: 656px;
    width: 1241px;
    height: 20px;
    padding-left: 5px;
    background: #d0d0d0;
    border-radius: 0 6px 6px 6px;
    font: 12px/19px "Open Sans", "Noto Sans", sans-serif;
    letter-spacing: -0.2px;
    color: #000;
}

.watermark {
    position: absolute;
    left: 1036px;
    top: 608px;
    opacity: 0.45;
}

.wm-text text {
    font: 49px "Liberation Sans", sans-serif;
    fill: #fff;
    stroke: #fff;
    stroke-width: 0.8px;
}

/* taskbar */
.taskbar {
    height: 40px;
    flex: none;
    margin-top: 4px;
    display: flex;
    background: linear-gradient(to right, #001620, #000d1b 70%, #000617);
    font-family: "Open Sans", "Noto Sans", sans-serif;
    color: #fff;
}

.start {
    width: 48px;
    display: flex;
    align-items: center;
    justify-content: center;
}

.search {
    width: 288px;
    display: flex;
    align-items: center;
    gap: 10px;
    padding-left: 12px;
    background: #f2f2f2;
    border: 1px solid #ccc;
    color: #333;
    font-size: 15px;
}

.search span {
    letter-spacing: -0.55px;
}

.apps {
    display: flex;
}

.apps div {
    width: 49px;
    display: flex;
    align-items: center;
    justify-content: center;
}

.apps .running {
    width: 48px;
    margin-left: 2px;
    background: #33424b;
    border-bottom: 2px solid #76b9ed;
}

.tray {
    margin-left: auto;
    display: flex;
    align-items: center;
    gap: 8px;
    padding-right: 24px;
}

.tray > svg:first-child {
    margin-right: 4px;
}

.clock {
    width: 57px;
    margin: 0 8px 0 -2px;
    display: flex;
    flex-direction: column;
    align-items: center;
    font-size: 12px;
    line-height: 18px;
    letter-spacing: -0.4px;
}
```
